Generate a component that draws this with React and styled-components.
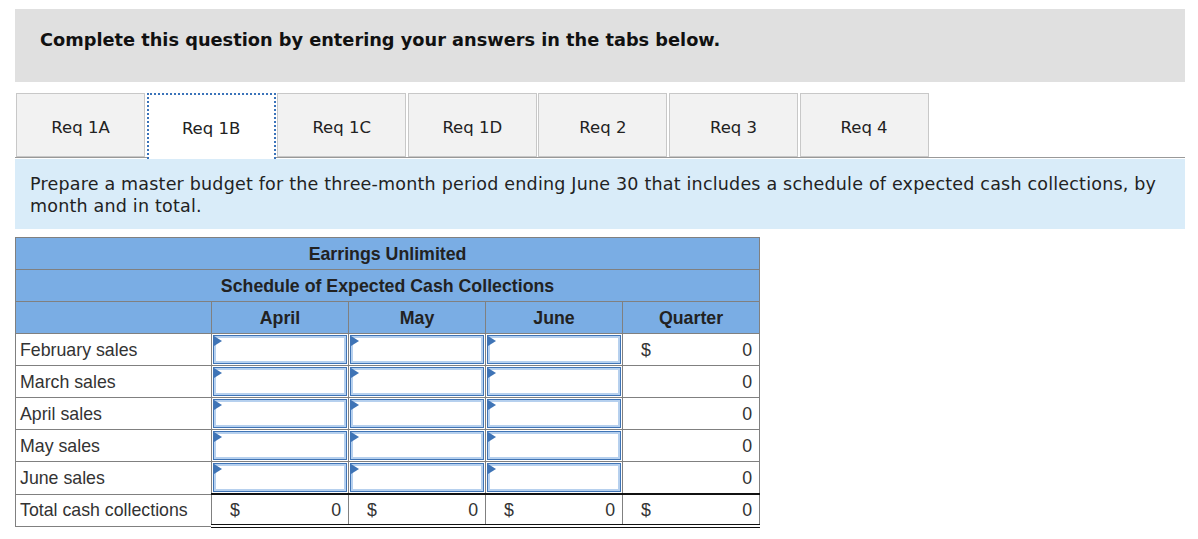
import React from "react";
import styled, { createGlobalStyle } from "styled-components";

const GlobalStyle = createGlobalStyle`
  body {
    margin: 0;
    background: #ffffff;
    font-family: "DejaVu Sans", Verdana, sans-serif;
    color: #222222;
  }
`;

const tabs = ["Req 1A", "Req 1B", "Req 1C", "Req 1D", "Req 2", "Req 3", "Req 4"];
const rows = ["February sales", "March sales", "April sales", "May sales", "June sales"];

export default function App() {
  return (
    <Page>
      <GlobalStyle />
      <Banner>Complete this question by entering your answers in the tabs below.</Banner>

      <TabBar>
        {tabs.map((t) => (
          <Tab key={t} active={t === "Req 1B"}>
            {t}
          </Tab>
        ))}
      </TabBar>

      <Prompt>
        Prepare a master budget for the three-month period ending June 30 that includes a schedule
        of expected cash collections, by month and in total.
      </Prompt>

      <Table>
        <colgroup>
          <col style={{ width: 196 }} />
          <col style={{ width: 137 }} />
          <col style={{ width: 137 }} />
          <col style={{ width: 137 }} />
          <col style={{ width: 137 }} />
        </colgroup>
        <thead>
          <tr>
            <HeadCell colSpan={5}>Earrings Unlimited</HeadCell>
          </tr>
          <tr>
            <HeadCell colSpan={5}>Schedule of Expected Cash Collections</HeadCell>
          </tr>
          <tr>
            <HeadCell />
            <HeadCell>April</HeadCell>
            <HeadCell>May</HeadCell>
            <HeadCell>June</HeadCell>
            <HeadCell>Quarter</HeadCell>
          </tr>
        </thead>
        <tbody>
          {rows.map((r, i) => (
            <tr key={r}>
              <LabelCell>{r}</LabelCell>
              {[0, 1, 2].map((c) => (
                <InputCell key={c}>
                  <Entry>
                    <Marker />
                  </Entry>
                </InputCell>
              ))}
              <ValueCell>
                <Amount>
                  <span>{i === 0 ? "$" : ""}</span>
                  <span>0</span>
                </Amount>
              </ValueCell>
            </tr>
          ))}
          <tr>
            <LabelCell>Total cash collections</LabelCell>
            {[0, 1, 2, 3].map((c) => (
              <TotalCell key={c}>
                <Amount>
                  <span>$</span>
                  <span>0</span>
                </Amount>
              </TotalCell>
            ))}
          </tr>
        </tbody>
      </Table>
    </Page>
  );
}

const Page = styled.div`
  padding: 9px 13px 20px 15px;
  display: flex;
  flex-direction: column;
`;

const Banner = styled.div`
  background: #e0e0e0;
  height: 73px;
  box-sizing: border-box;
  padding: 21px 25px 0;
  font-weight: bold;
  font-size: 17.75px;
  color: #111111;
`;

const TabBar = styled.div`
  display: flex;
  gap: 1.6px;
  margin-top: 11px;
  padding-left: 1px;
  border-bottom: 1px solid #999999;
  height: 64px;
`;

const Tab = styled.div`
  width: 129px;
  height: ${(p) => (p.active ? "66px" : "64px")};
  box-sizing: border-box;
  display: flex;
  align-items: center;
  justify-content: center;
  padding-bottom: ${(p) => (p.active ? "2px" : "0")};
  padding-top: 4px;
  font-size: 16.5px;
  color: #222222;
  background: ${(p) => (p.active ? "#ffffff" : "#f2f2f2")};
  border: ${(p) => (p.active ? "2px dotted #3b73b9" : "1px solid #c8c8c8")};
  border-bottom: ${(p) => (p.active ? "none" : "1px solid #c8c8c8")};
  position: relative;
  z-index: 1;
`;

const Prompt = styled.div`
  background: #d9ecf9;
  margin-top: 1px;
  padding: 14px 15px 12px;
  font-size: 17.5px;
  letter-spacing: 0.2px;
  line-height: 22px;
  color: #222222;
`;

const Table = styled.table`
  margin-top: 8px;
  width: 744px;
  border-collapse: collapse;
  table-layout: fixed;
  font-family: "Liberation Sans", Arial, sans-serif;
  font-size: 17.75px;
`;

const HeadCell = styled.th`
  background: #7aade4;
  border: 1px solid #808080;
  height: 30px;
  padding: 1px 0 0;
  font-weight: bold;
  color: #222222;
  text-align: center;
`;

const LabelCell = styled.td`
  border: 1px solid #808080;
  height: 30px;
  padding: 1px 4px 0;
  color: #333333;
  white-space: nowrap;
`;

const InputCell = styled.td`
  border: 1px solid #808080;
  height: 29px;
  padding: 1px;
`;

const Entry = styled.div`
  position: relative;
  height: 29px;
  box-sizing: border-box;
  border: 1px solid #3f74b6;
  box-shadow: inset 0 0 0 2px #b6d0ee;
  background: #ffffff;
`;

const Marker = styled.span`
  position: absolute;
  top: 0;
  left: 0;
  width: 0;
  height: 0;
  border-top: 5px solid transparent;
  border-bottom: 5px solid transparent;
  border-left: 8px solid #3f74b6;
`;

const ValueCell = styled.td`
  border: 1px solid #808080;
  height: 30px;
  padding: 1px 7px 0 18px;
  color: #333333;
`;

const TotalCell = styled(ValueCell)`
  height: 28px;
  border-top: 2px solid #111111;
  border-bottom: 4px double #111111;
`;

const Amount = styled.div`
  display: flex;
  justify-content: space-between;
  align-items: center;
`;
